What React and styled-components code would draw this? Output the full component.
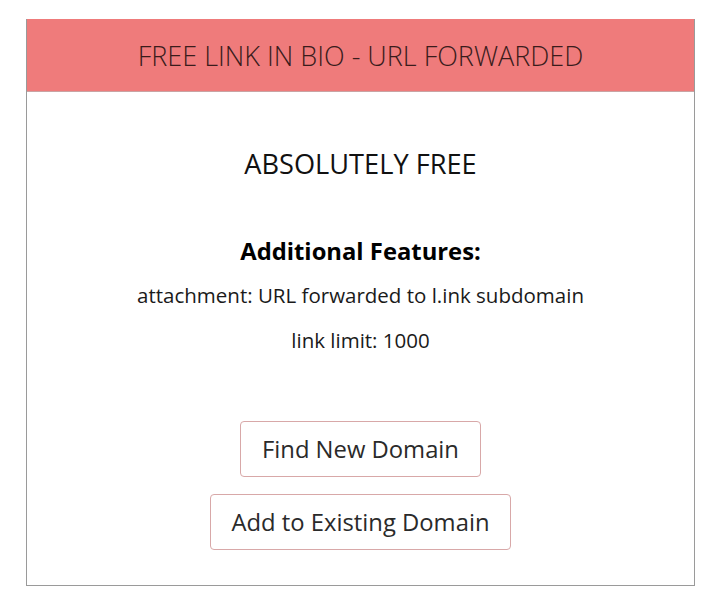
import React from 'react';
import styled, { createGlobalStyle } from 'styled-components';

const GlobalStyle = createGlobalStyle`
  body {
    margin: 0;
    background: #fff;
    font-family: 'Open Sans', 'Liberation Sans', sans-serif;
    color: #111;
  }
`;

const Page = styled.div`
  padding: 19px 25px 24px 26px;
`;

const Card = styled.div`
  border: 1px solid #9a9a9a;
  border-top: none;
  background: #fff;
`;

const Header = styled.div`
  background: #ef7b7b;
  height: 73px;
  display: flex;
  align-items: center;
  justify-content: center;
  font-size: 27px;
  font-weight: 300;
  color: #3a1c1c;
  border-bottom: 1px solid #c9a3a3;
  box-sizing: border-box;
`;

const Body = styled.div`
  display: flex;
  flex-direction: column;
  align-items: center;
  padding: 54px 0 35px;
`;

const Plan = styled.div`
  font-size: 27.2px;
  font-weight: 400;
  color: #111;
  line-height: 36px;
`;

const Subtitle = styled.div`
  margin-top: 53px;
  font-size: 23.8px;
  font-weight: 700;
  line-height: 32px;
  color: #000;
`;

const Feature = styled.div`
  margin-top: ${(p) => p.$gap}px;
  font-size: 20.5px;
  line-height: 28px;
  color: #1a1a1a;
`;

const Actions = styled.div`
  margin-top: 67px;
  display: flex;
  flex-direction: column;
  align-items: center;
  gap: 17px;
`;

const Button = styled.button`
  font-family: 'Open Sans', 'Liberation Sans', sans-serif;
  font-size: 23.8px;
  color: #2a2a2a;
  background: #fff;
  border: 1px solid #d8a8a8;
  border-radius: 4px;
  height: 56px;
  padding: 0 21px;
  cursor: pointer;
`;

export default function App() {
  return (
    <>
      <GlobalStyle />
      <Page>
        <Card>
          <Header>FREE LINK IN BIO - URL FORWARDED</Header>
          <Body>
            <Plan>ABSOLUTELY FREE</Plan>
            <Subtitle>Additional Features:</Subtitle>
            <Feature $gap={14}>attachment: URL forwarded to l.ink subdomain</Feature>
            <Feature $gap={17}>link limit: 1000</Feature>
            <Actions>
              <Button>Find New Domain</Button>
              <Button>Add to Existing Domain</Button>
            </Actions>
          </Body>
        </Card>
      </Page>
    </>
  );
}
